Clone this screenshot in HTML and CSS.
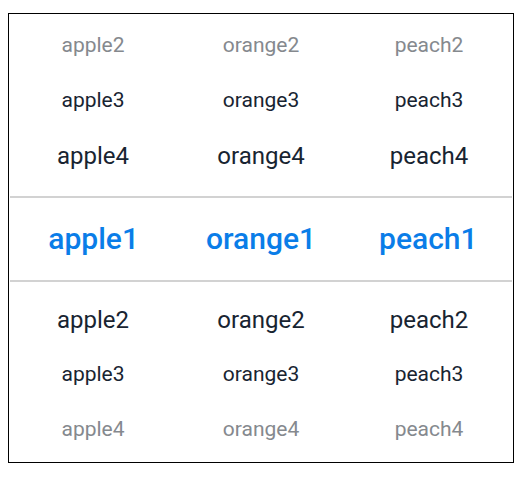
FILE: index.html
```html
<!DOCTYPE html>
<html>
<head>
<meta charset="utf-8">
<link rel="stylesheet" href="styles.css">
</head>
<body>
<div class="picker">
  <div class="group group-top">
    <div class="row faint"><span>apple2</span><span>orange2</span><span>peach2</span></div>
    <div class="row"><span>apple3</span><span>orange3</span><span>peach3</span></div>
    <div class="row near"><span>apple4</span><span>orange4</span><span>peach4</span></div>
  </div>
  <div class="row selected"><span>apple1</span><span>orange1</span><span>peach1</span></div>
  <div class="group group-bottom">
    <div class="row near"><span>apple2</span><span>orange2</span><span>peach2</span></div>
    <div class="row"><span>apple3</span><span>orange3</span><span>peach3</span></div>
    <div class="row faint"><span>apple4</span><span>orange4</span><span>peach4</span></div>
  </div>
</div>
</body>
</html>
```

FILE: styles.css
```css
html, body {
  margin: 0;
  padding: 0;
  background: #ffffff;
}
body {
  padding: 13px 0 0 8px;
  font-family: Roboto, "Noto Sans", sans-serif;
}
.picker {
  box-sizing: border-box;
  width: 506px;
  height: 450px;
  border: 1px solid #000000;
  display: flex;
  flex-direction: column;
}
.group-top {
  padding-top: 4px;
  margin-bottom: 13px;
}
.group-bottom {
  margin-top: 10px;
}
.row {
  display: grid;
  grid-template-columns: 1fr 1fr 1fr;
  height: 55px;
  align-items: center;
  text-align: center;
  font-size: 21px;
  line-height: 1;
  color: #182431;
}
.row.faint {
  color: #85898e;
}
.row.near {
  font-size: 24px;
}
.row.selected {
  box-sizing: border-box;
  height: 86px;
  margin: 0 1px;
  border-top: 2px solid #d2d2d2;
  border-bottom: 2px solid #d2d2d2;
  font-size: 30px;
  font-weight: 500;
  color: #0a7de8;
}
```
